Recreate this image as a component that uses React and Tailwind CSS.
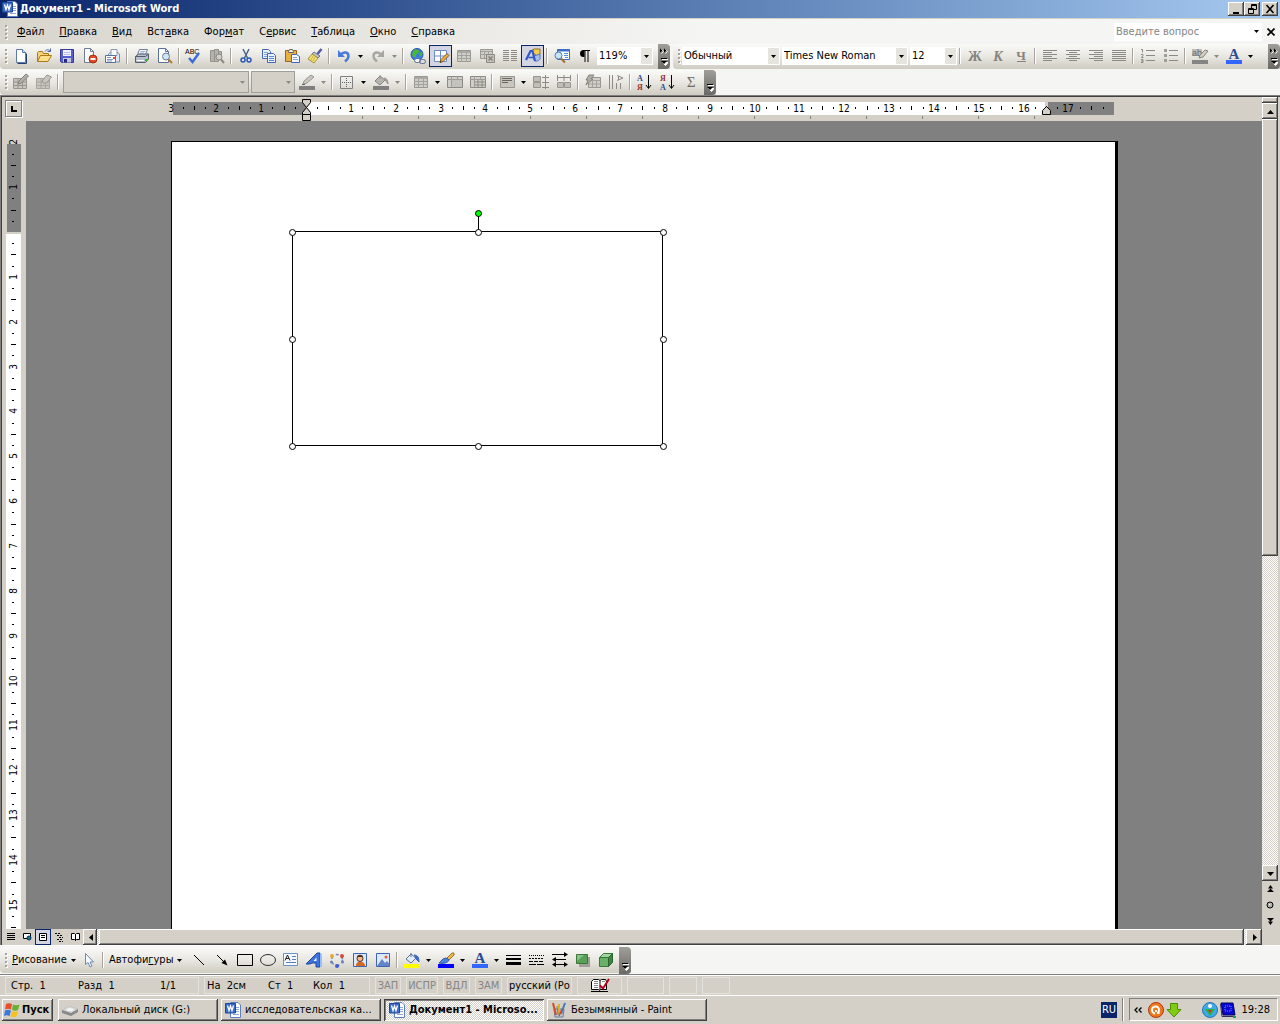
import { useState } from 'react';

const RAISED = 'bg-[#d4d0c8] shadow-[inset_-1px_-1px_#404040,inset_1px_1px_#fff,inset_-2px_-2px_#808080]';
const DITHER = 'bg-[repeating-conic-gradient(#fff_0_25%,#d4d0c8_0_50%)] bg-[size:2px_2px]';
const BAR = 'bg-linear-to-b from-[#fafaf8] via-[#e9e7e2] to-[#cfccc2]';

const CM = 44.85;

// 16x16 toolbar pictures
const icons = {
  word: (
    <>
      <path d="M5.500 .5h7.500l2.500 2.500v12.500h-10z" fill="#fff" stroke="#5b7fc0" />
      <path d="M10 5.500h4M11 7.500h3M11 9.500h3M8 12.500h6" stroke="#8fa9dc" />
      <path d="M.5 1.500h10v9.500h-10z" fill="#3b6cc8" stroke="#1f4896" />
      <path d="M2.500 3.500l1.500 5 1.500-4.500 1.500 4.500 1.500-5" stroke="#fff" strokeWidth="1.300" fill="none" />
    </>
  ),
  newDoc: (
    <>
      <path d="M3.500 1.500h6l3 3v10h-9z" fill="#fff" stroke="#5a78a8" />
      <path d="M9.500 1.500v3h3" fill="#cfe0f8" stroke="#5a78a8" />
      <path d="M4.500 15.500h9v-10" fill="none" stroke="#24406e" />
    </>
  ),
  open: (
    <>
      <path d="M1.500 13.500v-9l1-1h4l1 2h5v2" fill="#f5d275" stroke="#a87a1c" />
      <path d="M1.500 13.500l3-6h11l-3.500 6z" fill="#ffe08a" stroke="#a87a1c" />
      <path d="M9 3.500c1-2 3.500-2.500 5-.5M14.500 .5v3h-3" fill="none" stroke="#4a6c9c" />
    </>
  ),
  save: (
    <>
      <path d="M1.500 1.500h13v13h-12l-1-1z" fill="#5660cc" stroke="#3438a0" />
      <path d="M4 2h8v6H4z" fill="#f2f2ff" />
      <path d="M5 4.500h6M5 6.500h6" stroke="#b8bce8" />
      <path d="M4 10h8v4.500H4z" fill="#c8c8d8" />
      <path d="M5 11h3v3.500H5z" fill="#26267a" />
    </>
  ),
  perm: (
    <>
      <path d="M2.500 .5h6l3 3v11h-9z" fill="#fff" stroke="#6c7c94" />
      <path d="M8.500 .5v3h3" fill="none" stroke="#6c7c94" />
      <circle cx="11" cy="11" r="4" fill="#e04a26" stroke="#a82c10" />
      <path d="M8.500 11h5" stroke="#fff" strokeWidth="2" />
    </>
  ),
  mail: (
    <>
      <path d="M3.500 6l5-4.500 6 4.500v8h-11z" fill="#dce6f4" stroke="#8090a8" />
      <path d="M6 1.500h6v6H6z" fill="#fff" stroke="#8898b0" />
      <path d="M.5 7.500h10v7H.5z" fill="#fff" stroke="#58729c" />
      <path d="M2 9.500h4M2 11.500h6M2 13h5" stroke="#7c94bc" />
      <path d="M8 9h2v2H8z" fill="#d84830" />
    </>
  ),
  print: (
    <>
      <path d="M5.500 1.500h8l-2 5h-8z" fill="#fff" stroke="#6c7c94" />
      <path d="M6.500 3.500h5M6 5h4" stroke="#9cb0d0" />
      <path d="M1.500 8.500l3-2.500h10v5l-3 3.500h-10z" fill="#b8c0cc" stroke="#525c70" />
      <path d="M1.500 8.500h10l3-2.500" fill="none" stroke="#525c70" />
      <path d="M3 12.500h7" stroke="#fff" />
      <path d="M11 11h3v2h-3z" fill="#28c020" />
    </>
  ),
  preview: (
    <>
      <path d="M1.500 .5h7l3 3v11h-10z" fill="#fff" stroke="#58729c" />
      <path d="M8.500 .5v3h3" fill="none" stroke="#58729c" />
      <circle cx="9" cy="8.500" r="3.500" fill="#cfe4f6" stroke="#6c7c94" />
      <path d="M11.500 11.500l3.500 3.500" stroke="#b87828" strokeWidth="2" />
    </>
  ),
  spell: (
    <>
      <text x="-1" y="6" fontSize="7" fontFamily="Liberation Sans, sans-serif" fill="#000">ABC</text>
      <path d="M3 10l3.500 4L13 5" fill="none" stroke="#3c6cd8" strokeWidth="2.400" />
    </>
  ),
  research: (
    <>
      <path d="M1.500 2.500h4v11h-4zM5.500 1.500h4v12h-4zM9.500 3.500h3v7h-3z" fill="#b4b2ac" stroke="#94928c" />
      <circle cx="10" cy="9" r="3" fill="#d0cec8" stroke="#8c8a84" />
      <path d="M12 11.500l3 3.500" stroke="#8c8a84" strokeWidth="2" />
    </>
  ),
  cut: (
    <>
      <path d="M5 1l4.500 9M11 1L6.500 10" fill="none" stroke="#4c6488" strokeWidth="1.500" />
      <circle cx="5" cy="12" r="2" fill="none" stroke="#2c58b8" strokeWidth="1.500" />
      <circle cx="11" cy="12" r="2" fill="none" stroke="#2c58b8" strokeWidth="1.500" />
    </>
  ),
  copy: (
    <>
      <path d="M1.500 1.500h6l2 2v7h-8z" fill="#e8f0fc" stroke="#4468b0" />
      <path d="M3 4.500h4M3 6.500h5M3 8.500h4" stroke="#86a4dc" />
      <path d="M6.500 5.500h6l2 2v7h-8z" fill="#e8f0fc" stroke="#4468b0" />
      <path d="M8 8.500h5M8 10.500h5M8 12.500h5" stroke="#5c84d0" />
    </>
  ),
  paste: (
    <>
      <path d="M1.500 2.500h11v11h-11z" fill="#e8b040" stroke="#94641c" />
      <path d="M4.500 3.500l1-2h3l1 2v1h-5z" fill="#e8e8e8" stroke="#686868" />
      <path d="M7.500 6.500h5l3 2v6h-8z" fill="#f4f8ff" stroke="#4468b0" />
      <path d="M9 9.500h4M9 11.500h5" stroke="#86a4dc" />
    </>
  ),
  painter: (
    <>
      <path d="M14.500 1l-4 5" stroke="#5858a8" strokeWidth="2.500" />
      <path d="M7 4l6 4-2 2-6-4z" fill="#c0c4cc" stroke="#6c7080" />
      <path d="M5 6l6 4-4 5-6-4z" fill="#f4e478" stroke="#a89030" />
      <path d="M6 8l-2 4M8 9l-2 4" stroke="#c8ac40" />
    </>
  ),
  undo: (
    <>
      <path d="M4.500 7c3-4 8-3 8 1 0 3-1.500 4-3.500 5.500" fill="none" stroke="#4878d8" strokeWidth="2.400" />
      <path d="M2 2v7h7z" fill="#4878d8" />
    </>
  ),
  redo: (
    <>
      <path d="M11.500 7c-3-4-8-3-8 1 0 3 1.500 4 3.500 5.500" fill="none" stroke="#a8a6a0" strokeWidth="2.400" />
      <path d="M14 2v7H7z" fill="#a8a6a0" />
    </>
  ),
  link: (
    <>
      <circle cx="7" cy="6.500" r="6" fill="#3c7ce0" stroke="#2c549c" />
      <path d="M3 3c3-3 7-1 6 1s-3 1-3 4-3 1-4-1z" fill="#48b838" />
      <path d="M10 4l2.500 1-1 4-2-2z" fill="#48b838" />
      <rect x="4.500" y="10.500" width="6" height="4" rx="2" fill="#f0f4fa" stroke="#5c6c90" />
      <rect x="9.500" y="11.500" width="6" height="4" rx="2" fill="none" stroke="#5c6c90" />
    </>
  ),
  tableDraw: (
    <>
      <path d="M1.500 2.500h12v11h-12z" fill="#fff" stroke="#6c8cc0" />
      <path d="M7.500 2.500v11M1.500 8h12" stroke="#6c8cc0" />
      <path d="M7 14.500l1-3 6-6 2 2-6 6z" fill="#f0b040" stroke="#805820" />
      <path d="M7 14.500l.5-1.500 1 1z" fill="#202020" />
    </>
  ),
  tableGray: (
    <>
      <path d="M1.500 2.500h13v11h-13z" fill="#d0cec8" stroke="#9a9892" />
      <path d="M1.500 3.500h13M1.500 4.500h13" stroke="#aaa8a2" />
      <path d="M1.500 7.500h13M1.500 10.500h13M5.500 5v8.500M10.500 5v8.500" stroke="#a4a29c" />
    </>
  ),
  excelGray: (
    <>
      <path d="M1.500 1.500h12v9h-12z" fill="#d0cec8" stroke="#9a9892" />
      <path d="M1.500 3.500h12M1.500 6.500h12M5.500 3v7M9.500 3v7" stroke="#a4a29c" />
      <path d="M7.500 6.500h8v8h-8z" fill="#c4c2bc" stroke="#8c8a84" />
      <path d="M9.500 8.500l4 4M13.500 8.500l-4 4" stroke="#85837d" strokeWidth="1.500" />
    </>
  ),
  columns: <path d="M1 2.500h6M1 4.500h6M1 6.500h6M1 8.500h6M1 10.500h6M1 12.500h6M9 2.500h6M9 4.500h6M9 6.500h6M9 8.500h6M9 10.500h6M9 12.500h6" stroke="#8c8a84" />,
  drawing: (
    <>
      <path d="M6 3l3-2h6v5l-3 2z" fill="#f4cc50" stroke="#987020" />
      <path d="M15 6v5c-1 2-5 3-6 1V8z" fill="#a8c0ec" stroke="#5878b0" />
      <path d="M1 12L5.500 3h2L10 13" fill="none" stroke="#3058c8" strokeWidth="2.200" />
      <path d="M3.500 9.500h5" stroke="#3058c8" strokeWidth="1.600" />
    </>
  ),
  docMap: (
    <>
      <path d="M3.500 1.500h12v10h-12z" fill="#fff" stroke="#3c6cc8" />
      <path d="M3 2.500h13" stroke="#3c6cc8" strokeWidth="2" />
      <path d="M10 5.500h4M10 7.500h4M11 9.500h3" stroke="#4c8cd8" />
      <circle cx="4.500" cy="7.500" r="3.500" fill="#c8e4f8" stroke="#4c7cb0" />
      <path d="M7 10.500l4 4" stroke="#a87030" strokeWidth="2.200" />
    </>
  ),
  pilcrow: (
    <>
      <path d="M7.500 2h-1a3.500 3.500 0 0 0 0 7h1z" />
      <path d="M6 2.500h7M8 2v12M11 2v12" stroke="#000" />
    </>
  ),
  bold: <text x="8" y="13" textAnchor="middle" fontSize="14" fontWeight="bold" fontFamily="Liberation Serif, serif" fill="#85837d">Ж</text>,
  italic: <text x="8" y="13" textAnchor="middle" fontSize="14" fontWeight="bold" fontStyle="italic" fontFamily="Liberation Serif, serif" fill="#85837d">К</text>,
  underline: (
    <>
      <text x="8" y="12" textAnchor="middle" fontSize="13" fontWeight="bold" fontFamily="Liberation Serif, serif" fill="#85837d">Ч</text>
      <path d="M4 13.500h9" stroke="#85837d" />
    </>
  ),
  alignLeft: <path d="M1 2.500h14M1 4.500h9M1 6.500h14M1 8.500h9M1 10.500h14M1 12.500h9" stroke="#8c8a84" />,
  alignCenter: <path d="M1 2.500h14M4 4.500h8M1 6.500h14M4 8.500h8M1 10.500h14M4 12.500h8" stroke="#8c8a84" />,
  alignRight: <path d="M1 2.500h14M6 4.500h9M1 6.500h14M6 8.500h9M1 10.500h14M6 12.500h9" stroke="#8c8a84" />,
  justify: <path d="M1 2.500h14M1 4.500h14M1 6.500h14M1 8.500h14M1 10.500h14M1 12.500h14" stroke="#8c8a84" />,
  numList: (
    <>
      <path d="M6 2.500h9M6 7.500h9M6 12.500h9" stroke="#8c8a84" />
      <path d="M1 1.500h1.500v3M1 6.500h2v1l-1.500 2h2M1 11.500h2v3h-2M1 13h2" fill="none" stroke="#8c8a84" />
    </>
  ),
  bulList: (
    <>
      <path d="M6 2.500h9M6 7.500h9M6 12.500h9" stroke="#8c8a84" />
      <path d="M1 1h3v3H1zM1 6h3v3H1zM1 11h3v3H1z" fill="#a09e98" />
    </>
  ),
  highlight: (
    <>
      <path d="M0 1h10v7H0z" fill="#c0beb8" />
      <text x="0" y="8" fontSize="9" fontFamily="Liberation Sans, sans-serif" fill="#6c6a64">ab</text>
      <path d="M7 10l1-3 5-5 3 1-5 6z" fill="#d0cec8" stroke="#85837d" />
      <path d="M0 12h16v4H0z" fill="#858585" />
    </>
  ),
  fontColor: (
    <>
      <text x="8" y="11" textAnchor="middle" fontSize="15" fontWeight="bold" fontFamily="Liberation Serif, serif" fill="#2c4c94">A</text>
      <path d="M0 12h16v4H0z" fill="#3366ff" />
    </>
  ),
  pencilTable: (
    <>
      <path d="M.5 4.500h13v10h-13z" fill="#c8c6c0" stroke="#98968f" />
      <path d="M.5 8h13M.5 11.500h13M5 4.500v10M9.500 4.500v10" stroke="#98968f" />
      <path d="M5 10l1-3 7-7 2.500 2-7 7z" fill="#b0aea8" stroke="#85837d" />
    </>
  ),
  eraserTable: (
    <>
      <path d="M.5 4.500h13v10h-13z" fill="#c8c6c0" stroke="#a8a69f" />
      <path d="M.5 8h13M.5 11.500h13M5 4.500v10M9.500 4.500v10" stroke="#a8a69f" />
      <path d="M6 7l5-6 4.500 2-5 6h-3z" fill="#c8c6c0" stroke="#98968f" />
    </>
  ),
  penColor: (
    <>
      <path d="M4 10l1-3 7-6 3 2-7 6z" fill="#c8c6c0" stroke="#98968f" />
      <path d="M3 10.500h3" stroke="#606060" />
      <path d="M0 12h16v4H0z" fill="#808080" />
    </>
  ),
  border: (
    <>
      <path d="M1.500 2.500h12v12h-12z" fill="none" stroke="#808080" />
      <path d="M7.500 4v9M3 8.500h9" stroke="#606060" strokeDasharray="1 1" />
    </>
  ),
  fillGray: (
    <>
      <path d="M2 7l5-5 5 4-5 5z" fill="#b8b6b0" stroke="#85837d" />
      <path d="M7 5V1M11 4c3 0 4 3 4 6l-3-4" fill="#a8a6a0" stroke="#98968f" />
      <path d="M0 12h16v4H0z" fill="#808080" />
    </>
  ),
  mergeCells: (
    <>
      <path d="M.5 2.500h15v11H.5z" fill="#d0cec8" stroke="#8c8a84" />
      <path d="M.5 5.500h15M4.500 2.500v11M10.500 2.500v3" stroke="#a09e98" />
      <path d="M5 6h10v7H5z" fill="#c4c2bc" />
    </>
  ),
  splitCells: (
    <>
      <path d="M.5 2.500h15v11H.5z" fill="#d0cec8" stroke="#8c8a84" />
      <path d="M.5 5.500h15M4.500 2.500v11M10.500 2.500v3" stroke="#a09e98" />
      <path d="M4.500 8h11M4.500 11h11M8 5.500v8M12 5.500v8" stroke="#8c8a84" />
    </>
  ),
  cellAlign: (
    <>
      <path d="M1.500 2.500h14v11h-14z" fill="#c8c6c0" stroke="#98968f" />
      <path d="M3 4.500h10M3 6.500h10M3 8.500h6" stroke="#68665f" />
    </>
  ),
  distRows: (
    <>
      <path d="M.5 2.500h7v5h-7zM.5 8.500h7v5h-7z" fill="#c0beb8" stroke="#98968f" />
      <path d="M9 3.500h7M9 8.500h7M9 13.500h7M12.500 1v14" stroke="#8c8a84" />
    </>
  ),
  distCols: (
    <>
      <path d="M1.500 8.500h6v5h-6zM8.500 8.500h6v5h-6z" fill="#c0beb8" stroke="#98968f" />
      <path d="M1.500 1v6M8 1v6M14.500 1v6M1 3.500h14" stroke="#8c8a84" />
    </>
  ),
  autoFormat: (
    <>
      <path d="M3.500 3.500h12v10h-12z" fill="#d0cec8" stroke="#98968f" />
      <path d="M3.500 6.500h12M3.500 10h12M7.500 6.500v7M11.500 6.500v7" stroke="#a4a29c" />
      <path d="M4 1h5L6 5h2l-7 6 2-5H1z" fill="#b0aea8" stroke="#85837d" />
    </>
  ),
  textDir: (
    <>
      <path d="M1.500 1v14M4.500 1v14M8.500 9v6M12.500 9v6" stroke="#8c8a84" />
      <path d="M9 1.500l6 2.500-6 2.500M10.500 2v4" fill="none" stroke="#8c8a84" />
    </>
  ),
  sortAZ: (
    <>
      <text x="0" y="7" fontSize="8" fontWeight="bold" fontFamily="Liberation Serif, serif" fill="#2c4c94">А</text>
      <text x="0" y="16" fontSize="8" fontWeight="bold" fontFamily="Liberation Serif, serif" fill="#983434">Я</text>
      <path d="M11.500 1v13M9 11l2.500 3.500L14 11" fill="none" stroke="#000" />
    </>
  ),
  sortZA: (
    <>
      <text x="0" y="7" fontSize="8" fontWeight="bold" fontFamily="Liberation Serif, serif" fill="#983434">Я</text>
      <text x="0" y="16" fontSize="8" fontWeight="bold" fontFamily="Liberation Serif, serif" fill="#2c4c94">А</text>
      <path d="M11.500 1v13M9 11l2.500 3.500L14 11" fill="none" stroke="#000" />
    </>
  ),
  sigma: <text x="8" y="13" textAnchor="middle" fontSize="15" fontFamily="Liberation Serif, serif" fill="#6c6a64">Σ</text>,
  pointer: <path d="M4.500 1.500v11l2.500-2 2 4.500 2-1-2-4h3.500z" fill="#f4f8ff" stroke="#7088b0" />,
  line: <path d="M3 3l10 10" stroke="#000" />,
  arrow: (
    <>
      <path d="M3 3l8 8" stroke="#000" />
      <path d="M13.500 13.500l-6-2.500 3.500-3.500z" />
    </>
  ),
  rect: <path d="M.5 2.500h15v11H.5z" fill="none" stroke="#000" />,
  oval: <ellipse cx="8" cy="8" rx="7.500" ry="5.500" fill="none" stroke="#303030" />,
  textBox: (
    <>
      <path d="M.5 1.500h14v12H.5z" fill="#f4f8ff" stroke="#6c90c8" />
      <path d="M2 8.500L4.500 3 7 8.500M3 6.500h3" fill="none" stroke="#202020" />
      <path d="M9 4.500h4M9 7.500h4M3 10.500h10" stroke="#5c7cb4" />
    </>
  ),
  wordArt: (
    <>
      <path d="M0 12L11 1h3v14h-4v-4H6l-2 1z" fill="#3c74dc" stroke="#1c48a0" />
      <path d="M7.500 9l3-3.500V9z" fill="#fff" />
      <path d="M14 1l2 1v13h-2z" fill="#9cc0f4" />
    </>
  ),
  diagram: (
    <>
      <circle cx="8" cy="8" r="5.500" fill="none" stroke="#6c84b8" strokeWidth="1.500" strokeDasharray="3 3" />
      <circle cx="3" cy="4" r="2" fill="#e8a838" />
      <circle cx="13" cy="4" r="2" fill="#d84838" />
      <circle cx="8" cy="14" r="2" fill="#3c5cd8" />
      <circle cx="2.500" cy="10" r="1.500" fill="#6c84b8" />
      <circle cx="13.500" cy="10" r="1.500" fill="#6c84b8" />
    </>
  ),
  clipArt: (
    <>
      <path d="M1.500 1.500h13v13h-13z" fill="#dce8fc" stroke="#3c64b0" />
      <path d="M4 14c0-4 2-4 4-4s5 0 5 4z" fill="#d86820" />
      <circle cx="8" cy="6.500" r="3" fill="#f0b888" stroke="#503020" />
      <path d="M5 5c0-3 6-3 6 0z" fill="#503020" />
    </>
  ),
  picture: (
    <>
      <path d="M1.500 1.500h13v13h-13z" fill="#dce8fc" stroke="#3c64b0" />
      <path d="M2 14l5-7 3 4 2-2 2.500 3v2z" fill="#6484c4" />
      <circle cx="11" cy="5" r="1.500" fill="#e06030" />
    </>
  ),
  fill: (
    <>
      <path d="M2 7l5-5 5 4-5 5z" fill="#e4ecf8" stroke="#5c7098" />
      <path d="M7 5V1" stroke="#5c7098" />
      <path d="M10 3c4 0 5 3 5 7l-4-4" fill="#3c68c0" stroke="#3c68c0" />
      <path d="M0 12h16v4H0z" fill="#ffff00" />
    </>
  ),
  lineColor: (
    <>
      <path d="M9 6l5-5h2v2l-5 5z" fill="#f0b848" stroke="#987030" />
      <path d="M1 11c2-1 3-5 7-5l3 2c-1 3-6 4-10 3z" fill="#4c84dc" stroke="#2c58a8" />
      <path d="M0 12h16v4H0z" fill="#0000ff" />
    </>
  ),
  lineStyle: (
    <>
      <path d="M0 3.500h15" stroke="#000" />
      <path d="M0 7h15" stroke="#000" strokeWidth="2" />
      <path d="M0 11.500h15" stroke="#000" strokeWidth="3" />
    </>
  ),
  dashStyle: (
    <>
      <path d="M0 3.500h15" stroke="#000" strokeDasharray="1 1" />
      <path d="M0 6.500h15" stroke="#000" strokeDasharray="2 1" />
      <path d="M0 9.500h15" stroke="#000" strokeDasharray="4 1" />
      <path d="M0 12.500h15" stroke="#000" strokeDasharray="7 1" />
    </>
  ),
  arrowStyle: (
    <>
      <path d="M0 2.500h13M1 7.500h13M2 12.500h13" stroke="#000" />
      <path d="M12 0l4 2.500L12 5zM4 5L0 7.500 4 10zM4 10l-4 2.500L4 15zM12 10l4 2.500-4 2.500z" />
    </>
  ),
  shadow: (
    <>
      <path d="M4 5h11v10H4z" fill="#a0a098" />
      <path d="M1.500 2.500h11v9h-11z" fill="#58a058" stroke="#387838" />
      <path d="M2 3h7l-7 6z" fill="#88c488" />
    </>
  ),
  threeD: (
    <>
      <path d="M1.500 5.500h9v9h-9z" fill="#68b068" stroke="#387838" />
      <path d="M1.500 5.500l4-4h9l-4 4z" fill="#a0d4a0" stroke="#387838" />
      <path d="M10.500 5.500l4-4v9l-4 4z" fill="#3c8440" stroke="#2c6430" />
    </>
  ),
  disk: (
    <>
      <path d="M0 8l7-4 9 3v3l-7 4-9-3z" fill="#888" />
      <path d="M0 8l7-4 9 3-7 4z" fill="#d4d4d4" />
      <ellipse cx="8" cy="7.500" rx="3.500" ry="1.500" fill="#f4f4f4" />
    </>
  ),
  paint: (
    <>
      <path d="M3 7l1 8h8l1-8z" fill="#b8c8dc" stroke="#6c7c98" />
      <path d="M5 13L2 1" stroke="#d84828" strokeWidth="2" />
      <path d="M8 12V2" stroke="#e8a828" strokeWidth="2" />
      <path d="M10 12l4-11" stroke="#4878b8" strokeWidth="2" />
      <path d="M7 13l-1-9" stroke="#48a048" />
      <path d="M8 14l3-7" stroke="#d84828" strokeWidth="1.500" />
    </>
  ),
  windows: (
    <>
      <path d="M2 2c2-1 4-1 6 0L7 7.500c-2-1-4-1-6 0z" fill="#e8502c" />
      <path d="M9 2.500c2 1 4 1 6.500 0L14 8c-2 1-4 1-6 0z" fill="#68b030" />
      <path d="M1 8.500c2-1 4-1 6 0L5.500 14c-2-1-4-1-5.500 0z" fill="#3c78dc" />
      <path d="M8 9c2 1 4 1 6 0l-1.500 5.500c-2 1-4 1-6 0z" fill="#f8c020" />
    </>
  ),
  book: (
    <>
      <path d="M-.5 3.500l2-2h5l1.500 1 1.500-1h4l1 2v8h-6l-1 1-1-1h-7z" fill="#fff" stroke="#000" />
      <path d="M8 2.500v9.500M-1 13.500h17" stroke="#000" />
      <path d="M2 3.500h4M2 5.500h4M2 7.500h4M2 9.500h4M10 3.500h3" stroke="#888" />
      <path d="M8 7.500l3 3L17 1" fill="none" stroke="#b00018" strokeWidth="2" />
    </>
  ),
  avast: (
    <>
      <circle cx="8" cy="8" r="7.500" fill="#f07818" stroke="#b03810" />
      <circle cx="7.500" cy="8" r="3.500" fill="none" stroke="#fff" strokeWidth="2" />
      <path d="M8 8v3h3.500" fill="none" stroke="#fff" strokeWidth="2" />
      <path d="M7 10h2v3H7z" fill="#f07818" />
    </>
  ),
  download: <path d="M4.500 1.500h7v6h3.500L8 15 1 7.500h3.500z" fill="#80cc10" stroke="#4c8c08" />,
  globe: (
    <>
      <circle cx="8" cy="8" r="7.500" fill="#40a8e8" stroke="#2474b8" />
      <circle cx="8" cy="4" r="2" fill="#fff" />
      <path d="M3 7h10l-5 7z" fill="#28b040" />
      <path d="M6 8h4l-2 3z" fill="#d83020" />
    </>
  ),
  monitor: (
    <>
      <path d="M1 1h12l2 12H3z" fill="#0808d0" stroke="#000060" />
      <path d="M5 4h6v5H5z" fill="none" stroke="#8888ff" strokeDasharray="1 1" />
      <path d="M.5 2l1.500 12.500h12" fill="none" stroke="#303060" />
      <path d="M13 14h3v2h-3z" fill="#18a050" />
    </>
  ),
};

function Icon({ name }) {
  return (
    <svg viewBox="0 0 16 16" width="16" height="16" className="shrink-0 overflow-visible" fill="#000" aria-hidden="true">
      {icons[name]}
    </svg>
  );
}

function Tri({ gray, dir = 'down' }) {
  const paths = {
    down: 'M0 1h5L2.500 4z',
    up: 'M-1 5h7L2.500 1z',
    bigDown: 'M-1 1h7L2.500 5z',
    left: 'M5 -1v7L1 2.500z',
    right: 'M1 -1v7l4-3.500z',
  };
  return (
    <svg viewBox="0 0 5 5" width="5" height="5" className="shrink-0 overflow-visible" fill={gray ? '#8c8a84' : '#000'} aria-hidden="true">
      <path d={paths[dir]} />
    </svg>
  );
}

function Tool({ icon, label, on }) {
  return (
    <button
      aria-label={label}
      className={`flex h-[22px] w-[23px] shrink-0 items-center justify-center ${on ? 'border border-[#0a246a] bg-[#d4d5e2]' : ''}`}
    >
      <Icon name={icon} />
    </button>
  );
}

function Drop({ gray, label }) {
  return (
    <button aria-label={label} disabled={gray} className="flex h-[22px] w-[11px] shrink-0 items-center justify-center">
      <Tri gray={gray} />
    </button>
  );
}

function Sep() {
  return <span className="mx-[2px] h-4 w-[2px] shrink-0 border-l border-[#a6a49c] bg-white" />;
}

function Grip() {
  return (
    <span className="flex h-full w-[9px] shrink-0 flex-col items-center justify-center gap-[2px] pl-[3px]">
      {[0, 1, 2, 3].map((i) => (
        <span key={i} className="h-[2px] w-[2px] bg-[#a6a49c] shadow-[1px_1px_#fff]" />
      ))}
    </span>
  );
}

function Tail({ more }) {
  return (
    <button aria-label="Параметры панелей" className="-mb-px flex w-[12px] shrink-0 flex-col items-center justify-end gap-[4px] self-stretch rounded-r-sm bg-linear-to-b from-[#a09e98] to-[#6c6a66] pb-[3px]">
      {more && (
        <svg viewBox="0 0 8 6" width="8" height="6" aria-hidden="true">
          <path d="M1.500 1.500l2 2-2 2M5.500 1.500l2 2-2 2" fill="none" stroke="#fff" />
          <path d="M0 .5l2.500 2L0 4.500zM4 .5l2.500 2L4 4.500z" />
        </svg>
      )}
      <svg viewBox="0 0 7 8" width="7" height="8" aria-hidden="true">
        <path d="M1 1.500h6M1.500 4.500h5.500l-2.500 3z" fill="#fff" stroke="#fff" />
        <path d="M0 .5h6" stroke="#000" />
        <path d="M0 3h6L3 6z" />
      </svg>
    </button>
  );
}

function Combo({ label, value, width, disabled }) {
  return (
    <span className={`relative flex shrink-0 ${width} ${disabled ? 'h-[22px] border border-[#a09e98] bg-[#d4d0c8]' : 'h-[18px] border border-white bg-white'}`}>
      <select aria-label={label} disabled={disabled} className="w-full appearance-none bg-transparent pl-px leading-4 text-black outline-none">
        <option>{value}</option>
      </select>
      <span className={`pointer-events-none absolute inset-y-0 right-0 flex w-[11px] items-center justify-center ${disabled ? '' : 'bg-[#e6e4df]'}`}>
        <Tri gray={disabled} />
      </span>
    </span>
  );
}

const menus = [
  ['', 'Ф', 'айл'],
  ['', 'П', 'равка'],
  ['', 'В', 'ид'],
  ['Вст', 'а', 'вка'],
  ['Фор', 'м', 'ат'],
  ['С', 'е', 'рвис'],
  ['', 'Т', 'аблица'],
  ['', 'О', 'кно'],
  ['', 'С', 'правка'],
];

function TitleBar() {
  const glyphs = {
    'Свернуть': <path d="M3 9h6v2H3z" />,
    'Восстановить': <path d="M5.500 1.500h5v5h-5zM5 2.500h6M2.500 5.500h5v5h-5zM2 6.500h6" fill="#d4d0c8" stroke="#000" />,
    'Закрыть': <path d="M2.500 2l7 8M9.500 2l-7 8" stroke="#000" strokeWidth="1.600" />,
  };
  return (
    <header className="flex h-[18px] shrink-0 items-center bg-linear-to-r from-[#0a246a] to-[#a6caf0] pl-[2px] text-white">
      <Icon name="word" />
      <h1 className="pl-[2px] font-bold">Документ1 - Microsoft Word</h1>
      <div className="ml-auto flex pr-[2px]">
        {Object.keys(glyphs).map((k) => (
          <button key={k} aria-label={k} className={`flex h-[14px] w-4 items-center justify-center last:ml-[2px] ${RAISED}`}>
            <svg viewBox="0 0 12 12" width="12" height="12" aria-hidden="true">{glyphs[k]}</svg>
          </button>
        ))}
      </div>
    </header>
  );
}

function MenuBar() {
  return (
    <nav className="flex h-[26px] shrink-0 items-center border-t border-[#d4d0c8] bg-linear-to-r from-[#d8d5cd] to-[#f5f5f3] to-55%">
      <Grip />
      <div className="flex gap-[15px] pl-2">
        {menus.map(([a, b, c]) => (
          <button key={b + c}>
            {a}<u>{b}</u>{c}
          </button>
        ))}
      </div>
      <div className="ml-auto flex h-[18px] w-[148px] items-center bg-white">
        <input aria-label="Введите вопрос" placeholder="Введите вопрос" className="w-0 flex-1 pl-[2px] outline-none placeholder:text-[#858585]" />
        <Drop label="Список вопросов" />
      </div>
      <button aria-label="Закрыть документ" className="flex w-[18px] items-center justify-center">
        <svg viewBox="0 0 8 8" width="8" height="8" aria-hidden="true">
          <path d="M.5 .5l7 7M7.500 .5l-7 7" stroke="#000" strokeWidth="1.600" />
        </svg>
      </button>
    </nav>
  );
}

function Toolbars() {
  return (
    <div className="shrink-0 bg-[#f5f5f3]">
      <div className="mb-px flex h-[25px] gap-[3px]">
        <div className={`flex items-center rounded-l pb-px ${BAR}`}>
          <Grip />
          <Tool icon="newDoc" label="Создать" />
          <Tool icon="open" label="Открыть" />
          <Tool icon="save" label="Сохранить" />
          <Tool icon="perm" label="Разрешения" />
          <Tool icon="mail" label="Сообщение" />
          <Sep />
          <Tool icon="print" label="Печать" />
          <Tool icon="preview" label="Просмотр" />
          <Sep />
          <Tool icon="spell" label="Правописание" />
          <Tool icon="research" label="Справочные материалы" />
          <Sep />
          <Tool icon="cut" label="Вырезать" />
          <Tool icon="copy" label="Копировать" />
          <Tool icon="paste" label="Вставить" />
          <Tool icon="painter" label="Формат по образцу" />
          <Sep />
          <Tool icon="undo" label="Отменить" />
          <Drop label="Список отмены" />
          <Tool icon="redo" label="Вернуть" />
          <Drop gray label="Список возврата" />
          <Sep />
          <Tool icon="link" label="Гиперссылка" />
          <Tool icon="tableDraw" label="Таблицы и границы" on />
          <Tool icon="tableGray" label="Добавить таблицу" />
          <Tool icon="excelGray" label="Таблица Excel" />
          <Tool icon="columns" label="Колонки" />
          <Tool icon="drawing" label="Рисование" on />
          <Sep />
          <Tool icon="docMap" label="Схема документа" />
          <Tool icon="pilcrow" label="Непечатаемые знаки" />
          <span className="flex pr-[5px] pl-px">
            <Combo label="Масштаб" value="119%" width="w-[56px]" />
          </span>
          <Tail more />
        </div>
        <div className={`flex flex-1 items-center rounded-l pb-px ${BAR}`}>
          <Grip />
          <div className="flex gap-[2px]">
            <Combo label="Стиль" value="Обычный" width="w-[98px]" />
            <Combo label="Шрифт" value="Times New Roman" width="w-[126px]" />
            <Combo label="Размер" value="12" width="w-[47px]" />
          </div>
          <Sep />
          <Tool icon="bold" label="Полужирный" />
          <Tool icon="italic" label="Курсив" />
          <Tool icon="underline" label="Подчеркнутый" />
          <Sep />
          <Tool icon="alignLeft" label="По левому краю" />
          <Tool icon="alignCenter" label="По центру" />
          <Tool icon="alignRight" label="По правому краю" />
          <Tool icon="justify" label="По ширине" />
          <Sep />
          <Tool icon="numList" label="Нумерованный список" />
          <Tool icon="bulList" label="Маркированный список" />
          <Sep />
          <Tool icon="highlight" label="Выделение цветом" />
          <Drop gray label="Цвет выделения" />
          <Tool icon="fontColor" label="Цвет шрифта" />
          <Drop label="Выбор цвета шрифта" />
          <span className="flex-1" />
          <Tail more />
        </div>
      </div>
      <div className="flex h-[25px]">
        <div className={`flex items-center rounded-l pb-px ${BAR}`}>
          <Grip />
          <Tool icon="pencilTable" label="Нарисовать таблицу" />
          <Tool icon="eraserTable" label="Ластик" />
          <Sep />
          <span className="flex gap-[2px] pl-[2px]">
            <Combo label="Тип линии" value="" width="w-[186px]" disabled />
            <Combo label="Толщина линии" value="" width="w-[44px]" disabled />
          </span>
          <Tool icon="penColor" label="Цвет границы" />
          <Drop gray label="Выбор цвета границы" />
          <Sep />
          <Tool icon="border" label="Границы" />
          <Drop label="Выбор границ" />
          <Tool icon="fillGray" label="Заливка ячеек" />
          <Drop gray label="Выбор заливки" />
          <Sep />
          <Tool icon="tableGray" label="Вставить таблицу" />
          <Drop label="Варианты вставки" />
          <Tool icon="mergeCells" label="Объединить ячейки" />
          <Tool icon="splitCells" label="Разбить ячейки" />
          <Sep />
          <Tool icon="cellAlign" label="Выравнивание" />
          <Drop label="Варианты выравнивания" />
          <Tool icon="distRows" label="Выровнять высоту строк" />
          <Tool icon="distCols" label="Выровнять ширину столбцов" />
          <Sep />
          <Tool icon="autoFormat" label="Автоформат" />
          <Tool icon="textDir" label="Направление текста" />
          <Sep />
          <Tool icon="sortAZ" label="По возрастанию" />
          <Tool icon="sortZA" label="По убыванию" />
          <Tool icon="sigma" label="Автосумма" />
          <span className="w-[2px]" />
          <Tail />
        </div>
      </div>
    </div>
  );
}

// Ruler scale: numbers on whole cm, a bar on halves, dots on quarters
function Scale({ from, to, zero, axis }) {
  const marks = [];
  for (let q = from * 4; q <= to * 4; q++) {
    if (q === 0) continue;
    const p = Math.round(zero + (q * CM) / 4);
    if (q % 4 === 0) {
      const n = Math.abs(q / 4);
      marks.push(
        axis === 'x' ? (
          <text key={q} x={p} y="12" textAnchor="middle">{n}</text>
        ) : (
          <text key={q} transform={`translate(10 ${p}) rotate(-90)`} textAnchor="middle">{n}</text>
        )
      );
    } else if (axis === 'x') {
      marks.push(<rect key={q} x={p} y={q % 2 === 0 ? 6 : 7} width="1" height={q % 2 === 0 ? 4 : 2} />);
    } else {
      marks.push(<rect key={q} x={q % 2 === 0 ? 4 : 5} y={p} width={q % 2 === 0 ? 5 : 2} height="1" />);
    }
  }
  return <g fontSize="10">{marks}</g>;
}

function HRuler() {
  return (
    <svg viewBox="0 0 947 24" width="947" height="24" className="mx-auto shrink-0 overflow-visible" role="img" aria-label="Горизонтальная линейка">
      <path d="M2 5h133v13H2zM877 5h66v13h-66z" fill="#808080" />
      <path d="M135 5h739v13H135z" fill="#fff" />
      <g transform="translate(0 3)">
        <Scale from={-3} to={17} zero={135} axis="x" />
        <path d="M909 7h1v2h-1zM920 6h1v4h-1zM932 7h1v2h-1z" />
      </g>
      {Array.from({ length: 13 }, (_, i) => (
        <path key={i} d={`M${191 + i * 56}.5 19v3`} stroke="#808080" />
      ))}
      <g fill="#d4d0c8" stroke="#000">
        <path d="M131.500 2.500h8v3l-4 5-4-5z" />
        <path d="M135.500 10.500l4 5v2h-8v-2z" />
        <path d="M131.500 17.500h8v6h-8z" />
        <path d="M875.500 9.500l4 4v4h-8v-4z" />
      </g>
    </svg>
  );
}

function VRuler() {
  return (
    <svg width="24" height="100%" className="shrink-0 bg-[#d4d0c8]" role="img" aria-label="Вертикальная линейка">
      <rect x="5" y="23" width="14" height="88" fill="#808080" />
      <rect x="4" y="113" width="15" height="695" fill="#fff" />
      <g transform="translate(5 0)">
        <Scale from={-2} to={15} zero={111} axis="y" />
        <path d="M5 795h2v1h-2zM4 806h5v1h-5z" />
      </g>
    </svg>
  );
}

function Page() {
  const xs = [4, 190, 375];
  const ys = [23, 130, 237];
  return (
    <div className="mx-auto mt-5 flex w-[947px] shrink-0 border-t border-r-[3px] border-l border-black bg-white pt-[67px] pl-[116px]">
      <svg viewBox="0 0 380 242" width="380" height="242" role="img" aria-label="Выделенный прямоугольник">
        <path d="M4.500 22.500h370v214h-370zM190.500 5v18" fill="none" stroke="#000" />
        {xs.map((x, i) =>
          ys.map((y, j) =>
            i === 1 && j === 1 ? null : (
              <circle key={`${x}-${y}`} cx={x + 0.5} cy={y + 0.5} r="3" fill="#fff" stroke="#000" />
            )
          )
        )}
        <circle cx="190.500" cy="4.500" r="3" fill="#00ff00" stroke="#000" />
      </svg>
    </div>
  );
}

function VScroll() {
  return (
    <div className="flex w-4 shrink-0 flex-col bg-[#d4d0c8]">
      <button aria-label="Разделить окно" className={`h-[6px] ${RAISED}`} />
      <button aria-label="Вверх" className={`flex h-4 items-center justify-center ${RAISED}`}><Tri dir="up" /></button>
      <div className={`h-[437px] ${RAISED}`} />
      <div className={`flex-1 ${DITHER}`} />
      <button aria-label="Вниз" className={`flex h-4 items-center justify-center ${RAISED}`}><Tri dir="bigDown" /></button>
      <button aria-label="Предыдущая страница" className="flex h-4 items-center justify-center">
        <svg viewBox="0 0 7 8" width="7" height="8" aria-hidden="true"><path d="M1 3.500L3.500 0 6 3.500zM0 7l3.500-3.500L7 7z" /></svg>
      </button>
      <button aria-label="Объект перехода" className="flex h-4 items-center justify-center">
        <svg viewBox="0 0 8 8" width="8" height="8" aria-hidden="true"><circle cx="4" cy="4" r="3" fill="#b4b2ac" stroke="#000" /><path d="M3 3h1v1H3z" fill="#fff" /></svg>
      </button>
      <button aria-label="Следующая страница" className="flex h-4 items-center justify-center">
        <svg viewBox="0 0 7 8" width="7" height="8" aria-hidden="true"><path d="M0 1l3.500 3.500L7 1zM1 4.500L3.500 8 6 4.500z" /></svg>
      </button>
      <span className="h-4" />
    </div>
  );
}

const views = [
  ['Обычный', <path key="a" d="M0 1.500h8M0 3.500h8M0 5.500h8M0 7.500h8" stroke="#000" />],
  ['Веб-документ', <g key="b"><path d="M.5 1.500h7v5h-7z" fill="#fff" stroke="#000" /><circle cx="6" cy="6" r="2" fill="#1c8c50" stroke="#002080" /></g>],
  ['Разметка страницы', <path key="c" d="M.5 1.500h7v7h-7zM2 3.500h4M2 5.500h4" fill="#fff" stroke="#000" />],
  ['Структура', <path key="d" d="M0 1.500h5M2 3.500h6M4 5.500h4M2 7.500h5M4 9.500h4" stroke="#000" strokeDasharray="2 1" />],
  ['Чтение', <path key="e" d="M.5 1.500h3l1 1 1-1h3v6h-3l-1 1-1-1h-3zM4.500 2v7" fill="#fff" stroke="#000" />],
];

function HScroll() {
  const [view, setView] = useState(2);
  return (
    <div className="flex h-4 shrink-0 bg-[#d4d0c8] pl-px">
      {views.map(([name, pic], i) => (
        <button
          key={name}
          aria-label={name}
          onClick={() => setView(i)}
          className={`flex w-4 items-center justify-center ${i === view ? 'border border-[#0a246a] bg-[#d4d5e2]' : ''}`}
        >
          <svg viewBox="0 0 9 10" width="9" height="10" aria-hidden="true">{pic}</svg>
        </button>
      ))}
      <button aria-label="Влево" className={`flex w-[14px] items-center justify-center ${RAISED}`}><Tri dir="left" /></button>
      <span className={`w-[2px] ${DITHER}`} />
      <div className={`flex-1 ${RAISED}`} />
      <span className={`w-[2px] ${DITHER}`} />
      <button aria-label="Вправо" className={`flex w-4 items-center justify-center ${RAISED}`}><Tri dir="right" /></button>
    </div>
  );
}

function WorkArea() {
  return (
    <main className="flex min-h-0 flex-1 border-t border-l border-[#808080]">
      <div className="flex min-w-0 flex-1 border-t border-l border-[#404040] pr-[2px]">
        <div className="flex min-w-0 flex-1 flex-col bg-[#d4d0c8]">
          <div className="flex h-6 shrink-0">
            <span className="flex w-[24px] shrink-0 pt-[3px] pl-[3px]">
              <button aria-label="Табуляция" className="flex h-[17px] w-[17px] items-center justify-center border border-[#808080] shadow-[inset_1px_1px_#fff,1px_1px_#fff]">
                <svg viewBox="0 0 6 6" width="6" height="6" aria-hidden="true"><path d="M0 0h2v4h4v2H0z" /></svg>
              </button>
            </span>
            <div className="flex min-w-0 flex-1 overflow-hidden pl-px"><HRuler /></div>
          </div>
          <div className="flex min-h-0 flex-1">
            <VRuler />
            <div className="flex min-w-0 flex-1 overflow-hidden bg-[#808080] pl-px"><Page /></div>
          </div>
          <HScroll />
        </div>
        <VScroll />
      </div>
    </main>
  );
}

function DrawBar() {
  return (
    <div className="flex h-[30px] shrink-0 border-t border-b border-t-white border-b-[#808080] bg-[#f5f5f3] py-px">
      <div className={`flex items-center rounded-l ${BAR}`}>
        <Grip />
        <button className="flex w-[68px] items-center gap-1 pl-[3px]"><span><u>Р</u>исование</span><Tri /></button>
        <Tool icon="pointer" label="Выбор объектов" />
        <Sep />
        <button className="flex w-[81px] items-center gap-1 pl-[3px]"><span>Автофи<u>г</u>уры</span><Tri /></button>
        <Tool icon="line" label="Линия" />
        <Tool icon="arrow" label="Стрелка" />
        <Tool icon="rect" label="Прямоугольник" />
        <Tool icon="oval" label="Овал" />
        <Tool icon="textBox" label="Надпись" />
        <Tool icon="wordArt" label="WordArt" />
        <Tool icon="diagram" label="Диаграмма" />
        <Tool icon="clipArt" label="Картинка" />
        <Tool icon="picture" label="Рисунок" />
        <Sep />
        <Tool icon="fill" label="Цвет заливки" />
        <Drop label="Выбор заливки" />
        <Tool icon="lineColor" label="Цвет линий" />
        <Drop label="Выбор цвета линий" />
        <Tool icon="fontColor" label="Цвет шрифта" />
        <Drop label="Выбор цвета шрифта" />
        <Tool icon="lineStyle" label="Тип линии" />
        <Tool icon="dashStyle" label="Тип штриха" />
        <Tool icon="arrowStyle" label="Тип стрелки" />
        <Tool icon="shadow" label="Тень" />
        <Tool icon="threeD" label="Объем" />
        <span className="w-[2px]" />
        <Tail />
      </div>
    </div>
  );
}

function StatusBar() {
  const box = 'flex h-[17px] items-center border border-[#e4e2dc] whitespace-pre';
  return (
    <div className="flex h-5 shrink-0 items-center gap-[5px] border-t border-white bg-[#d4d0c8] pl-[5px]">
      <div className={`${box} w-[194px] pl-[5px]`}>
        <span className="w-[67px]">Стр.  1</span>
        <span className="w-[82px]">Разд  1</span>
        <span>1/1</span>
      </div>
      <div className={`${box} w-[166px] pl-[2px]`}>
        <span className="w-[61px]">На  2см</span>
        <span className="w-[45px]">Ст  1</span>
        <span>Кол  1</span>
      </div>
      <button className={`${box} w-[26px] justify-center text-[#858585]`}>ЗАП</button>
      <button className={`${box} w-[32px] justify-center text-[#858585]`}>ИСПР</button>
      <button className={`${box} w-[27px] justify-center text-[#858585]`}>ВДЛ</button>
      <button className={`${box} w-[27px] justify-center text-[#858585]`}>ЗАМ</button>
      <span className={`${box} w-[65px] pl-px`}>русский (Ро</span>
      <span className={`${box} w-[45px] justify-center`}><Icon name="book" /></span>
      <span className={`${box} w-[37px]`} />
      <span className={`${box} w-[28px]`} />
      <span className={`${box} w-[28px]`} />
    </div>
  );
}

const tasks = [
  { icon: 'disk', title: 'Локальный диск (G:)' },
  { icon: 'word', title: 'исследовательская ка...' },
  { icon: 'word', title: 'Документ1 - Microso...', active: true },
  { icon: 'paint', title: 'Безымянный - Paint' },
];

function TaskBar() {
  return (
    <footer className="flex h-[29px] shrink-0 items-center gap-[3px] border-t border-white bg-[#d4d0c8] pr-[2px] pb-px pl-[2px]">
      <button className={`mr-[2px] flex h-[22px] w-[51px] items-center gap-[2px] pl-[2px] font-bold ${RAISED}`}>
        <Icon name="windows" />
        Пуск
      </button>
      {tasks.map((t) => (
        <button
          key={t.title}
          className={`flex h-[22px] w-[160px] items-center gap-1 text-left whitespace-nowrap ${
            t.active
              ? `pt-px pl-[5px] font-bold shadow-[inset_1px_1px_#404040,inset_-1px_-1px_#fff,inset_2px_2px_#808080] ${DITHER}`
              : `pl-[4px] ${RAISED}`
          }`}
        >
          <Icon name={t.icon} />
          <span>{t.title}</span>
        </button>
      ))}
      <span className="ml-auto flex h-4 w-4 items-center justify-center bg-[#0a246a] text-white">RU</span>
      <span className="mx-[2px] h-[23px] w-[2px] border-l border-[#808080] bg-white" />
      <div className="flex h-[23px] w-[149px] items-center gap-[2px] border border-t-[#808080] border-r-white border-b-white border-l-[#808080] pl-1">
        <button aria-label="Показать скрытые значки" className="w-[12px]">
          <svg viewBox="0 0 9 6" width="9" height="6" aria-hidden="true"><path d="M3.500 .5L1 3l2.500 2.500M7.500 .5L5 3l2.500 2.500" fill="none" stroke="#000" strokeWidth="1.300" /></svg>
        </button>
        <Icon name="avast" />
        <Icon name="download" />
        <span className="w-4" />
        <Icon name="globe" />
        <Icon name="monitor" />
        <time className="ml-auto pr-[7px]">19:28</time>
      </div>
    </footer>
  );
}

export default function App() {
  return (
    <div className="flex h-screen flex-col overflow-hidden bg-[#d4d0c8] font-['DejaVu_Sans_Condensed','Noto_Sans',sans-serif] text-[11px] leading-[14px] text-black">
      <TitleBar />
      <MenuBar />
      <Toolbars />
      <WorkArea />
      <DrawBar />
      <StatusBar />
      <TaskBar />
    </div>
  );
}
